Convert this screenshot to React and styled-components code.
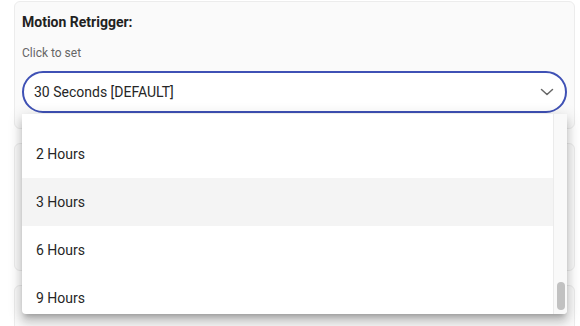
import React from "react";
import styled, { createGlobalStyle } from "styled-components";

const options = [
  "5 Seconds", "10 Seconds", "15 Seconds", "20 Seconds", "25 Seconds",
  "30 Seconds [DEFAULT]", "45 Seconds", "1 Minute", "2 Minutes", "3 Minutes",
  "4 Minutes", "5 Minutes", "6 Minutes", "7 Minutes", "8 Minutes",
  "9 Minutes", "10 Minutes", "15 Minutes", "20 Minutes", "30 Minutes",
  "45 Minutes", "1 Hour", "2 Hours", "3 Hours", "6 Hours", "9 Hours",
];

// the open menu is scrolled to its end; only the rows in view get rendered
const firstVisible = options.indexOf("2 Hours");

function App() {
  const visible = options.slice(firstVisible);

  return (
    <>
      <GlobalStyle />
      <Page>
        <Card>
          <Title>Motion Retrigger:</Title>
          <Hint>Click to set</Hint>
          <SelectWrap>
            <SelectBox>
              <span>30 Seconds [DEFAULT]</span>
              <svg width="14" height="8" viewBox="0 0 14 8">
                <polyline points="1.5,1.5 7,6.5 12.5,1.5" fill="none" stroke="#666" strokeWidth="1.5" strokeLinecap="round" strokeLinejoin="round" />
              </svg>
            </SelectBox>
            <Menu>
              <List>
                {visible.map((o) => (
                  <Option key={o} hovered={o === "3 Hours"}>{o}</Option>
                ))}
              </List>
              <ScrollTrack>
                <ScrollThumb />
              </ScrollTrack>
            </Menu>
          </SelectWrap>
        </Card>
        <Card />
        <Card />
      </Page>
    </>
  );
}

export default App;

const GlobalStyle = createGlobalStyle`
  html, body {
    margin: 0;
    padding: 0;
    background: #fff;
    overflow: hidden;
  }
  body {
    font-family: Roboto, "Liberation Sans", sans-serif;
    color: rgba(0, 0, 0, 0.87);
  }
`;

const Page = styled.div`
  display: flex;
  flex-direction: column;
  gap: 14px;
  height: 326px;
  overflow: hidden;
  padding: 1px 5px 0 14px;
`;

const Card = styled.div`
  position: relative;
  box-sizing: border-box;
  height: 128px;
  padding: 12px 7px 0 7px;
  background: #fafafa;
  border: 1px solid #ececec;
  border-radius: 6px;
  flex-shrink: 0;
`;

const Title = styled.div`
  font-size: 14px;
  font-weight: 700;
  line-height: 17px;
  color: #222;
`;

const Hint = styled.div`
  margin-top: 15px;
  font-size: 12px;
  line-height: 14px;
  color: #666;
`;

const SelectWrap = styled.div`
  position: relative;
  margin-top: 11px;
`;

const SelectBox = styled.div`
  box-sizing: border-box;
  height: 42px;
  display: flex;
  align-items: center;
  justify-content: space-between;
  padding: 0 11px 0 10px;
  background: #fff;
  border: 2px solid #3f51b5;
  border-radius: 21px;
  font-size: 14px;
  color: #262626;

  svg {
    display: block;
  }
`;

const Menu = styled.div`
  position: absolute;
  z-index: 10;
  left: 0;
  right: 0;
  top: 43px;
  height: 200px;
  display: flex;
  background: #fff;
  border-radius: 0 0 4px 4px;
  overflow: hidden;
  box-shadow: 0 5px 5px -3px rgba(0, 0, 0, 0.2),
    0 8px 10px 1px rgba(0, 0, 0, 0.14),
    0 3px 14px 2px rgba(0, 0, 0, 0.12);
`;

const List = styled.div`
  flex: 1;
  box-sizing: border-box;
  padding-top: 16px;
  overflow: hidden;
`;

const ScrollTrack = styled.div`
  width: 14px;
  box-sizing: border-box;
  display: flex;
  flex-direction: column;
  justify-content: flex-end;
  padding: 0 2px 4px 3px;
  background: #f9f9f9;
  border-left: 1px solid #ebebeb;
`;

const ScrollThumb = styled.div`
  height: 28px;
  border-radius: 4px;
  background: #c1c1c1;
`;

const Option = styled.div`
  height: 48px;
  display: flex;
  align-items: center;
  padding-left: 14px;
  font-size: 14px;
  color: #262626;
  background: ${(p) => (p.hovered ? "#f4f4f4" : "transparent")};
`;
